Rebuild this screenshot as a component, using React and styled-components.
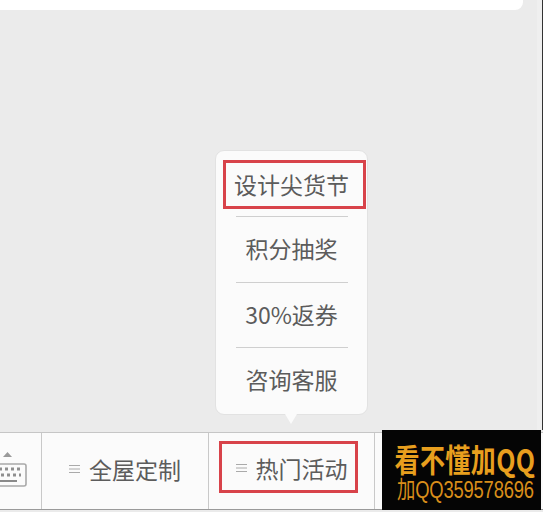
import React from "react";
import styled, { createGlobalStyle } from "styled-components";

const Global = createGlobalStyle`
  html, body { margin: 0; padding: 0; }
  body { width: 543px; height: 512px; overflow: hidden; background: #ebebeb; font-family: "Noto Sans CJK SC", "Noto Sans", sans-serif; }
`;
const Page = styled.div`
  position: relative; width: 543px; height: 512px; display: flex; flex-direction: column; justify-content: space-between; background: #ebebeb;
`;
const TopCard = styled.div`
  width: 523px; height: 10px; background: #fff; border-radius: 0 0 8px 0;
`;
const Bar = styled.div`
  height: 76px; margin-bottom: 2px; display: flex; background: #fbfbfb; border-top: 1px solid #c6c6c6; border-bottom: 1px solid #9a9a9a;
`;
const Tab = styled.div`
  width: ${p => p.$w}px; flex: none; box-sizing: border-box; display: flex; align-items: center; justify-content: ${p => p.$start ? "flex-start" : "center"}; gap: 9px;
  padding-bottom: ${p => p.$start ? 0 : 5}px; border-right: 1px solid #c9c9c9; color: #5c5c5c; font-size: 23px; line-height: 30px; white-space: nowrap;
`;
const Boxed = styled.div`
  box-sizing: border-box; width: 139px; height: 52px; margin: 0 6px 4px 0; padding: 2px 0 0 6px; border: 3px solid #d8434a; display: flex; align-items: center; justify-content: center; gap: 9px;
`;
const Menu = styled.div`
  position: absolute; left: 215px; top: 150px; width: 153px; height: 265px; box-sizing: border-box; background: #fbfbfb; border-radius: 9px; border: 1px solid #e2e2e2;
  display: flex; flex-direction: column; align-items: center;
  &::after { content: ""; position: absolute; left: 69px; bottom: -10px; width: 0; height: 0; border-left: 6px solid transparent; border-right: 6px solid transparent; border-top: 10px solid #fbfbfb; }
`;
const Item = styled.div`
  box-sizing: border-box; width: 112px; height: 65.5px; padding-bottom: 2px; flex: none; display: flex; align-items: center; justify-content: center; color: #5c5c5c; font-size: 23px; white-space: nowrap;
  border-top: 1px solid #cfcfcf;
`;
const Highlight = styled.div`
  box-sizing: border-box; width: 143px; height: 49px; margin: 9px 0 7px 7px; padding: 0 6px 2px 0; flex: none; align-self: flex-start; border: 3px solid #d8434a; display: flex; align-items: center; justify-content: center; color: #5c5c5c; font-size: 23px; white-space: nowrap;
`;
const Stamp = styled.div`
  position: absolute; left: 382px; top: 430px; width: 159px; height: 80px; box-sizing: border-box; padding-left: 7px; background: #050505; color: #e89f1e; display: flex; flex-direction: column; align-items: center; font-weight: 700;
`;
const StampBig = styled.div`
  font-size: 25px; line-height: 28px; margin-top: 14px; letter-spacing: 0.4px; white-space: nowrap; transform: scaleY(1.25);
`;
const StampSmall = styled.div`
  font-size: 20px; line-height: 20px; margin-top: 8px; font-weight: 400; color: #d98e1a; white-space: nowrap; font-family: "Liberation Sans", "Noto Sans CJK SC", sans-serif; letter-spacing: -0.2px; transform: scaleX(0.92) scaleY(1.2);
`;
const RightEdge = styled.div`
  position: absolute; left: 537px; top: 0; width: 6px; height: 430px; box-sizing: border-box; background: #efefef; border-right: 1px solid #333;
`;
const Menuicon = () => (
  <svg width="11" height="10" viewBox="0 0 11 10" fill="none" stroke="#aaa" strokeWidth="1"><path d="M0 1.5h11M0 5h11M0 8.5h11" /></svg>
);
const Keyboard = () => (
  <svg width="28" height="40" viewBox="0 0 28 40" fill="none">
    <path d="M3 6l4.5-5L12 6z" fill="#9a9a9a" />
    <rect x="-6" y="13" width="32" height="22" rx="2" stroke="#a9a9a9" strokeWidth="1.6" />
    <path d="M-1 18h24M1 24h20" stroke="#8f8f8f" strokeWidth="3" strokeDasharray="3 3" />
    <path d="M-3 30h20" stroke="#8a8a8a" strokeWidth="2" />
  </svg>
);
export default function App() {
  return (
    <Page>
      <Global />
      <TopCard />
      <Bar>
        <Tab $w={42} $start><Keyboard /></Tab>
        <Tab $w={167}><Menuicon /><span>全屋定制</span></Tab>
        <Tab $w={166}><Boxed><Menuicon /><span>热门活动</span></Boxed></Tab>
      </Bar>
      <Menu>
        <Highlight>设计尖货节</Highlight>
        <Item>积分抽奖</Item>
        <Item>30%返券</Item>
        <Item>咨询客服</Item>
      </Menu>
      <RightEdge />
      <Stamp>
        <StampBig>看不懂加QQ</StampBig>
        <StampSmall>加QQ359578696</StampSmall>
      </Stamp>
    </Page>
  );
}
